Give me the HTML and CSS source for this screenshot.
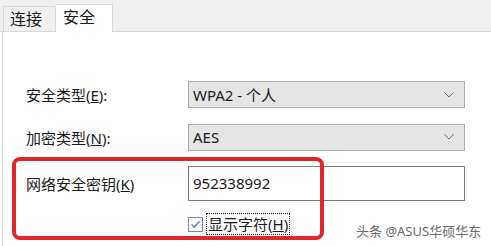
FILE: index.html
```html
<!DOCTYPE html>
<html lang="zh-CN">
<head>
    <meta charset="UTF-8">
    <title>安全</title>
    <link rel="stylesheet" href="styles.css">
</head>
<body>
    <div class="dialog">
        <div class="tabs">
            <div class="tab">连接</div>
            <div class="tab active">安全</div>
        </div>

        <div class="panel">
            <div class="form">
                <label class="label">安全类型(<u>E</u>):</label>
                <div class="combo">
                    <span>WPA2 - 个人</span>
                    <svg class="chevron" width="10" height="6" viewBox="0 0 10 6"><path d="M0.5 0.5 L5 5 L9.5 0.5" fill="none" stroke="#707070" stroke-width="1"/></svg>
                </div>

                <label class="label">加密类型(<u>N</u>):</label>
                <div class="combo">
                    <span>AES</span>
                    <svg class="chevron" width="10" height="6" viewBox="0 0 10 6"><path d="M0.5 0.5 L5 5 L9.5 0.5" fill="none" stroke="#707070" stroke-width="1"/></svg>
                </div>

                <label class="label">网络安全密钥(<u>K</u>)</label>
                <div class="textbox">952338992</div>

                <div></div>
                <div class="check-row">
                    <span class="checkbox">
                        <svg width="13" height="13" viewBox="0 0 13 13"><path d="M2.5 6.5 L5.2 9.3 L10.5 3.2" fill="none" stroke="#3f7fbf" stroke-width="1.3"/></svg>
                    </span>
                    <span class="check-label">显示字符(<u>H</u>)</span>
                </div>
            </div>

            <!-- 标注框 -->
            <div class="highlight"></div>
            <div class="watermark">头条 @ASUS华硕华东</div>
        </div>
    </div>
</body>
</html>
```

FILE: styles.css
```css
body {
    margin: 0;
    background: #ffffff;
    font-family: "Noto Sans", "Noto Sans CJK SC", sans-serif;
    color: #1a1a1a;
}
.dialog {
    width: 491px;
    height: 246px;
    overflow: hidden;
}
.tabs {
    display: flex;
    align-items: flex-end;
    height: 31px;
    padding-left: 3px;
    background: #f0f0f0;
    border-bottom: 1px solid #d9d9d9;
}
.tab {
    height: 25px;
    width: 53px;
    box-sizing: border-box;
    padding-left: 6px;
    font-size: 16px;
    line-height: 24px;
    background: #f0f0f0;
    border: 1px solid #d9d9d9;
    border-bottom: none;
}
.tab.active {
    height: 28px;
    width: 57px;
    margin-bottom: -1px;
    padding-left: 7px;
    background: #ffffff;
    line-height: 25px;
    border-left: none;
}
.panel {
    position: relative;
    height: 214px;
    border-left: 1px solid #d9d9d9;
    margin-left: 2px;
}
.form {
    display: grid;
    grid-template-columns: 162px 277px;
    grid-template-rows: 27px 28px 35px 15px;
    row-gap: 15px;
    align-items: center;
    padding: 49px 0 0 23px;
}
.form > *:nth-child(7),
.form > *:nth-child(8) {
    margin-top: 1px;
}
.label {
    font-size: 15px;
}
.combo {
    height: 27px;
    box-sizing: border-box;
    display: flex;
    align-items: center;
    justify-content: space-between;
    padding: 0 10px 0 4px;
    background: #e5e5e5;
    border: 1px solid #adadad;
    font-size: 15px;
}
.chevron {
    display: block;
}
.textbox {
    height: 35px;
    box-sizing: border-box;
    display: flex;
    align-items: center;
    padding: 0 4px 2px;
    border: 1px solid #7a7a7a;
    font-size: 15px;
}
.check-row {
    display: flex;
    align-items: center;
    gap: 4px;
    margin-top: 2px;
}
.checkbox {
    width: 15px;
    height: 15px;
    box-sizing: border-box;
    display: flex;
    align-items: center;
    justify-content: center;
    border: 1px solid #6d8fb3;
    background: #ffffff;
}
.check-label {
    font-size: 15px;
    line-height: 20px;
    padding: 0 1px;
    outline: 1px dotted #222;
}
.highlight {
    position: absolute;
    left: 9px;
    top: 125px;
    width: 312px;
    height: 83px;
    box-sizing: border-box;
    border: 4px solid #e0262b;
    border-radius: 8px;
}
.watermark {
    position: absolute;
    left: 353px;
    top: 189px;
    font-size: 13px;
    color: #6b6b6b;
}
```
